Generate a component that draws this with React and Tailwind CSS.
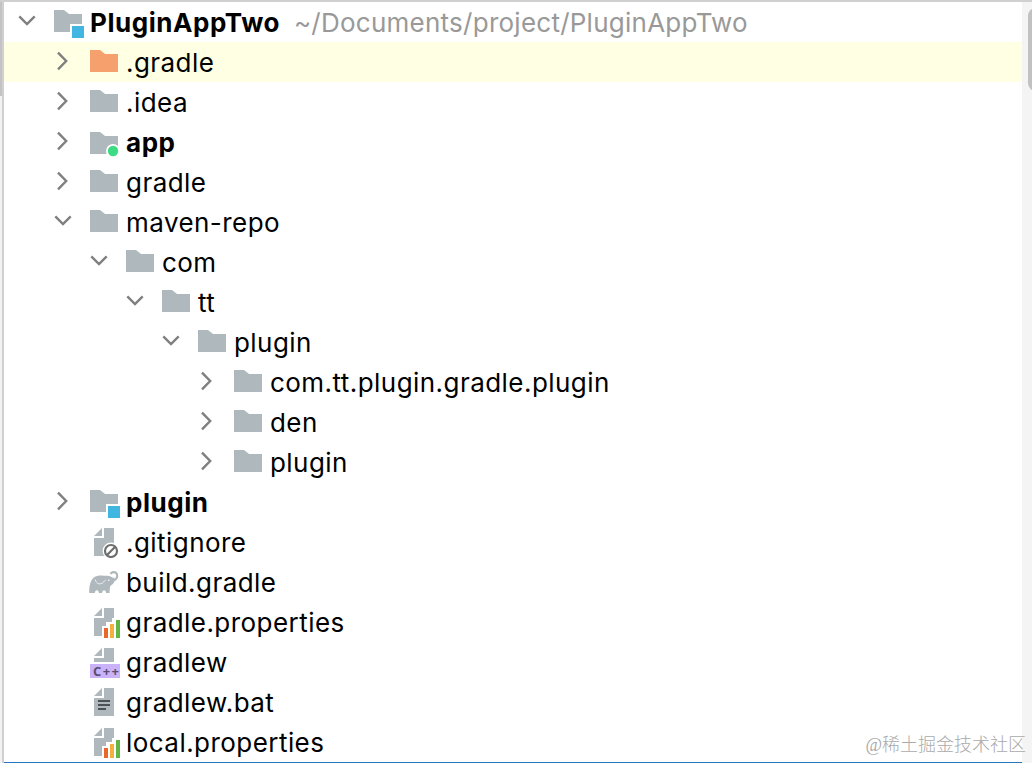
const rows = [
  { name: 'PluginAppTwo', depth: 0, icon: 'module', open: true, bold: true, path: '~/Documents/project/PluginAppTwo' },
  { name: '.gradle', depth: 1, icon: 'excluded', open: false, active: true },
  { name: '.idea', depth: 1, icon: 'folder', open: false },
  { name: 'app', depth: 1, icon: 'app', open: false, bold: true },
  { name: 'gradle', depth: 1, icon: 'folder', open: false },
  { name: 'maven-repo', depth: 1, icon: 'folder', open: true },
  { name: 'com', depth: 2, icon: 'folder', open: true },
  { name: 'tt', depth: 3, icon: 'folder', open: true },
  { name: 'plugin', depth: 4, icon: 'folder', open: true },
  { name: 'com.tt.plugin.gradle.plugin', depth: 5, icon: 'folder', open: false },
  { name: 'den', depth: 5, icon: 'folder', open: false },
  { name: 'plugin', depth: 5, icon: 'folder', open: false },
  { name: 'plugin', depth: 1, icon: 'module', open: false, bold: true },
  { name: '.gitignore', depth: 1, icon: 'ignore' },
  { name: 'build.gradle', depth: 1, icon: 'gradle' },
  { name: 'gradle.properties', depth: 1, icon: 'properties' },
  { name: 'gradlew', depth: 1, icon: 'cpp' },
  { name: 'gradlew.bat', depth: 1, icon: 'text' },
  { name: 'local.properties', depth: 1, icon: 'properties' },
];

const FOLDER = 'M2 4h10l5 4h13v18H2z';

function Icon({ type }) {
  return (
    <svg className="h-8 w-8 shrink-0" viewBox="0 0 32 32" fill="#afb8bc">
      {type === 'folder' && <path d={FOLDER} />}
      {type === 'excluded' && <path d={FOLDER} fill="#f6a16d" />}
      {type === 'module' && (
        <>
          <path d="M2 4h10l5 4h13v10H18v8H2z" />
          <path d="M20 20h12v12H20z" fill="#40b6e0" />
        </>
      )}
      {type === 'app' && (
        <>
          <path d="M2 6h10l5 4h13v18H2z" />
          <circle cx="25" cy="25" r="7" fill="#fff" />
          <circle cx="25" cy="25" r="5.2" fill="#3ddc84" />
        </>
      )}
      {type === 'ignore' && (
        <>
          <path d="M14 2v8H6z" />
          <path d="M16 2h10v28H6V12h10z" />
          <circle cx="23" cy="25" r="8.4" fill="#fff" />
          <circle cx="23" cy="25" r="6" fill="none" stroke="#6e6e6e" strokeWidth="2.2" />
          <path d="M18.8 29.2l8.4-8.4" stroke="#6e6e6e" strokeWidth="2.2" />
        </>
      )}
      {type === 'gradle' && (
        <>
          <path d="M1.300 27c-.4-6.500 1-13.500 5.500-16.300 4-2 8.500-1 12.500-1 3 0 4.500 1.800 7 2.300 1 .5.600 4-1.300 5.800-1 1-2.200 1.400-2.700 2.400-.6 1.300-.6 4.200-.7 6.800h-3.500c-.1-1.800-.8-2.700-2-2.700s-1.900.9-2 2.700h-3.200c-.1-1.800-.8-2.700-2-2.700s-1.900.9-2.100 2.700z" />
          <path d="M22.500 7.800c1.300-1.800 3.900-2.300 5.500-.9 1.800 1.700 1.500 4.700-.3 6.300-1.500 1.300-3.200 1-4.700.3" fill="none" stroke="#afb8bc" strokeWidth="2.200" />
          <path d="M7.300 13.500c.7 3.200 3.200 5 5.800 4.200 2.200-.7 3-2.700 4.700-3.900" fill="none" stroke="#fff" strokeOpacity=".8" strokeWidth="1" />
          <circle cx="20.700" cy="14.300" r=".8" fill="#fff" />
        </>
      )}
      {type === 'properties' && (
        <>
          <path d="M14 2v8H6z" />
          <path d="M16 2h10v10h-2v4h-6v4h-4v10H6V12h10z" />
          <path d="M16 22h4v10h-4z" fill="#e9662c" />
          <path d="M22 18h4v14h-4z" fill="#f4af3d" />
          <path d="M28 14h4v18h-4z" fill="#62b543" />
        </>
      )}
      {type === 'cpp' && (
        <>
          <path d="M14 2v8H6z" />
          <path d="M16 2h10v14H6v-4h10z" />
          <path d="M2 18h30v14H2z" fill="#c9b2f7" />
          <text x="5" y="29.500" textLength="26" className="font-['Open_Sans',sans-serif] text-[13px] font-bold" fill="#5a4d70">
            C++
          </text>
        </>
      )}
      {type === 'text' && (
        <>
          <path d="M14 2v8H6z" />
          <path d="M16 2h10v28H6V12h10z" />
          <path d="M10 14h12v2H10zM10 18h12v2H10zM10 22h8v2h-8z" fill="#4b5154" />
        </>
      )}
    </svg>
  );
}

function Chevron({ open }) {
  return (
    <svg className="h-8 w-8 shrink-0" viewBox="0 0 32 32" fill="none" stroke="#7f7f7f" strokeWidth="2.4">
      {open === true && <path d="M7.300 10.300l7.700 7.800 7.700-7.800" />}
      {open === false && <path d="M10 6.600l8.200 8.400-8.200 8.400" />}
    </svg>
  );
}

function TreeRow({ row }) {
  return (
    <li className={`flex h-10 items-center whitespace-nowrap pl-2 ${row.active ? 'bg-[#ffffe4]' : ''}`}>
      {/* one spacer per nesting level */}
      {Array.from({ length: row.depth }, (_, i) => (
        <span key={i} className="w-9 shrink-0" />
      ))}
      <Chevron open={row.open} />
      <span className="w-2 shrink-0" />
      <Icon type={row.icon} />
      <span className={`pl-1.5 pt-0.5 ${row.bold ? 'font-bold tracking-[0.55px]' : 'tracking-[0.45px]'}`}>{row.name}</span>
      {row.path && <span className="pl-3.5 pt-0.5 tracking-[0.25px] text-[#999]">{row.path}</span>}
    </li>
  );
}

export default function App() {
  return (
    <div className="relative flex h-[763px] w-[1032px] overflow-hidden border-t-2 border-[#d0d0d0] bg-white font-['Inter',sans-serif] text-[26px] leading-10 text-black">
      <div className="w-0.5 bg-[#f2f2f2]">
        <div className="h-[94px] bg-[#c4c2c4]" />
      </div>
      <div className="w-0.5 bg-[#d0d0d0]" />

      <ul className="h-[761px] w-[1018px] overflow-hidden border-b border-[#2675bf]">
        {rows.map((row, i) => (
          <TreeRow key={i} row={row} />
        ))}
      </ul>

      {/* scrollbar */}
      <div className="w-2.5 overflow-hidden bg-[#f4f4f4] pl-1.5 pt-1.5">
        <div className="h-[83px] w-4 rounded-full bg-[#c1c1c1]" />
      </div>

      <div className="absolute bottom-1 right-1.5 font-['Liberation_Serif','Noto_Sans_CJK_SC',serif] text-[18px] font-light leading-7 text-[#aaa]">
        @稀土掘金技术社区
      </div>
    </div>
  );
}
